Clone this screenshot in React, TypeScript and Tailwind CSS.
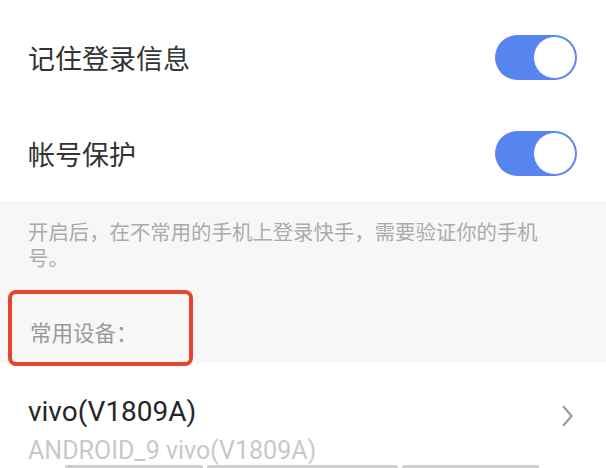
// Account security settings screen: toggles, hint, frequent devices

const cjk = "font-['Noto_Sans_CJK_SC','Noto_Sans',sans-serif]";
const latin = "font-['Roboto','Noto_Sans_CJK_SC',sans-serif]";

function Toggle() {
  return (
    <div className="flex h-[45px] w-[82px] items-center justify-end rounded-full bg-[#5784ef] p-[1px]">
      <div className="h-[43px] w-[43px] rounded-full border-[1.5px] border-[#5784ef] bg-white" />
    </div>
  );
}

function SwitchRow({ label }: { label: string }) {
  return (
    <div className="flex h-[96px] items-center justify-between pl-[28px] pr-[29px]">
      <span className={`${cjk} text-[27px] leading-none text-[#333333]`}>{label}</span>
      <Toggle />
    </div>
  );
}

export default function App() {
  return (
    <div className="relative h-[468px] w-[606px] overflow-hidden bg-white">
      {/* switches */}
      <div className="pt-[9px]">
        <SwitchRow label="记住登录信息" />
        <SwitchRow label="帐号保护" />
      </div>

      {/* hint + section title */}
      <div className="h-[162px] bg-[#f7f7f7] px-[28px] pt-[17px]">
        <p className={`${cjk} w-[522px] text-[20.4px] leading-[26px] text-[#ababab]`}>
          开启后，在不常用的手机上登录快手，需要验证你的手机号。
        </p>
        <div className={`${cjk} mt-[51px] pl-[2px] text-[21.5px] leading-none text-[#9a9a9a]`}>
          常用设备：
        </div>
      </div>

      {/* device row */}
      <div className="flex items-start justify-between pl-[28px] pr-[33px] pt-[33px]">
        <div className="flex flex-col">
          <span className={`${latin} text-[28px] leading-[32px] text-[#262626]`}>vivo(V1809A)</span>
          <span className={`${latin} mt-[8px] text-[25px] leading-[30px] text-[#c9c9c9]`}>
            ANDROID_9 vivo(V1809A)
          </span>
        </div>
        <svg width="11" height="22" viewBox="0 0 11 22" className="mt-[9px]">
          <path d="M1.2 1.2 L9.6 11 L1.2 20.8" fill="none" stroke="#9b9b9b" strokeWidth="2.2" />
        </svg>
      </div>

      {/* partial buttons peeking at the bottom */}
      <div className="absolute bottom-0 left-[65px] flex gap-[4px]">
        <div className="h-[3px] w-[138px] rounded-t-[2px] bg-[#cfcfcf]" />
        <div className="h-[3px] w-[191px] rounded-t-[2px] bg-[#cfcfcf]" />
        <div className="h-[3px] w-[137px] rounded-t-[2px] bg-[#cfcfcf]" />
      </div>

      {/* annotation box */}
      <div className="absolute left-[8px] top-[290px] h-[76px] w-[185px] rounded-[8px] border-[4px] border-[#e8432b]" />
    </div>
  );
}
